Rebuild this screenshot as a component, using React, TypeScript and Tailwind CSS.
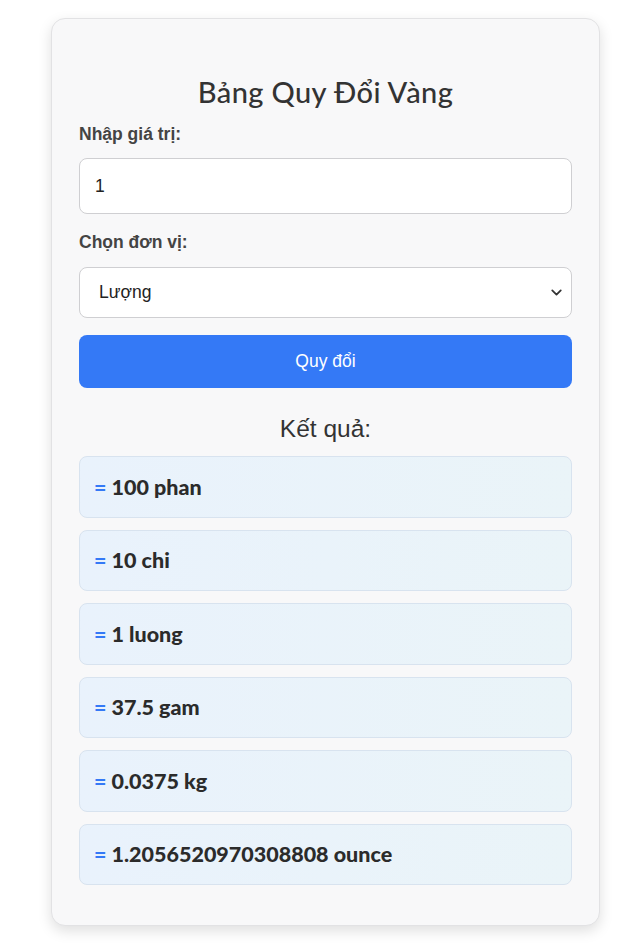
import { ChevronDown } from "lucide-react";

const results = [
  "100 phan",
  "10 chi",
  "1 luong",
  "37.5 gam",
  "0.0375 kg",
  "1.2056520970308808 ounce",
];

const App = () => {
  return (
    <div className="min-h-[952px] bg-white pt-[18px] pl-[51px] font-['Liberation_Sans',Arial,sans-serif]">
      <div className="w-[549px] rounded-[14px] border border-[#e2e2e4] bg-[#f8f8f9] px-[27px] pt-[56px] pb-[40px] shadow-[0_5px_14px_rgba(0,0,0,0.13)]">
        <h1 className="text-center font-['Lato',sans-serif] text-[29px] font-medium leading-[34px] tracking-[0.4px] text-[#333]">
          Bảng Quy Đổi Vàng
        </h1>

        <label className="mt-[14px] block text-[17.5px] font-bold leading-[22px] text-[#444]">
          Nhập giá trị:
        </label>
        <div className="mt-[13px] flex h-[56px] items-center rounded-[8px] border border-[#cfcfd2] bg-white px-[15px] text-[17.5px] text-[#222]">
          1
        </div>

        <label className="mt-[17px] block text-[17.5px] font-bold leading-[22px] text-[#444]">
          Chọn đơn vị:
        </label>
        <div className="mt-[14px] flex h-[51px] items-center justify-between rounded-[8px] border border-[#cfcfd2] bg-white pr-[6px] pl-[19px] text-[17.5px] text-[#222]">
          <span>Lượng</span>
          <ChevronDown className="h-[17px] w-[17px] text-[#333]" strokeWidth={2.5} />
        </div>

        <button className="mt-[17px] flex h-[53px] w-full items-center justify-center rounded-[8px] bg-[#3479f6] text-[17.5px] text-white">
          Quy đổi
        </button>

        <h2 className="mt-[26px] text-center text-[24.5px] leading-[30px] text-[#333]">
          Kết quả:
        </h2>

        <div className="mt-[12px] flex flex-col gap-[12px]">
          {results.map((r) => (
            <div
              key={r}
              className="flex h-[61.5px] items-center rounded-[8px] border border-[#d8e3ef] bg-gradient-to-r from-[#e9f2fc] to-[#eaf4f8] px-[14px] font-['Lato',sans-serif] text-[21.5px] font-black text-[#2b2b2b]"
            >
              <span className="mr-[5px] text-[#3479f6]">=</span>
              {r}
            </div>
          ))}
        </div>
      </div>
    </div>
  );
};

export default App;
